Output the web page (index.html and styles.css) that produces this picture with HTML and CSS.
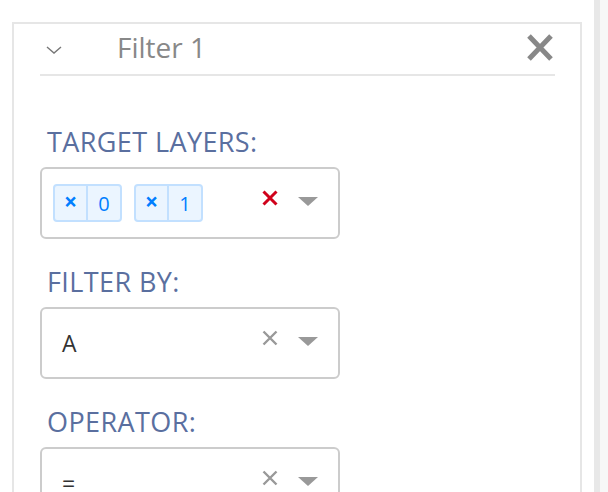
FILE: index.html
```html
<!DOCTYPE html>
<html lang="en">
<head>
<meta charset="utf-8">
<title>Filter</title>
<link rel="stylesheet" href="styles.css">
</head>
<body>
<div class="page">
  <main class="main">
    <section class="panel">
      <header class="panel-header">
        <svg class="chevron" width="16" height="8" viewBox="0 0 16 8"><polyline points="1,1 8,7 15,1" fill="none" stroke="#777" stroke-width="1.4"/></svg>
        <h2 class="title">Filter 1</h2>
        <svg class="close" width="26" height="27" viewBox="0 0 26 27"><path d="M2 2 L24 25 M24 2 L2 25" stroke="#888" stroke-width="5" fill="none"/></svg>
      </header>

      <div class="field">
        <label class="field-label">TARGET LAYERS:</label>
        <div class="select">
          <div class="select-values">
            <span class="tag"><span class="tag-remove">×</span><span class="tag-label">0</span></span>
            <span class="tag"><span class="tag-remove">×</span><span class="tag-label">1</span></span>
          </div>
          <svg class="clear clear-red" width="16" height="16" viewBox="0 0 16 16"><path d="M1.5 1.5 L14.5 14.5 M14.5 1.5 L1.5 14.5" stroke="#d0021b" stroke-width="3" fill="none"/></svg>
          <span class="arrow"></span>
        </div>
      </div>

      <div class="field">
        <label class="field-label">FILTER BY:</label>
        <div class="select">
          <div class="select-values"><span class="value-text">A</span></div>
          <svg class="clear" width="16" height="16" viewBox="0 0 16 16"><path d="M1.5 1.5 L14.5 14.5 M14.5 1.5 L1.5 14.5" stroke="#999" stroke-width="2.4" fill="none"/></svg>
          <span class="arrow"></span>
        </div>
      </div>

      <div class="field">
        <label class="field-label">OPERATOR:</label>
        <div class="select">
          <div class="select-values"><span class="value-text">=</span></div>
          <svg class="clear" width="16" height="16" viewBox="0 0 16 16"><path d="M1.5 1.5 L14.5 14.5 M14.5 1.5 L1.5 14.5" stroke="#999" stroke-width="2.4" fill="none"/></svg>
          <span class="arrow"></span>
        </div>
      </div>
    </section>
  </main>
  <div class="scrollbar"><div class="scrollbar-edge"></div><div class="scrollbar-track"></div></div>
</div>
</body>
</html>
```

FILE: styles.css
```css
html, body {
  margin: 0;
  padding: 0;
  height: 100%;
  overflow: hidden;
  background: #fff;
  font-family: "Open Sans", "Liberation Sans", sans-serif;
}

.page {
  display: flex;
  height: 100%;
}

.main {
  flex: 1;
  padding: 22px 0 0 12px;
}

.panel {
  width: 570px;
  height: 700px;
  box-sizing: border-box;
  border: 2px solid #e6e6e6;
  padding: 0 25px 0 26px;
}

.panel-header {
  display: flex;
  align-items: center;
  height: 52px;
  box-sizing: border-box;
  padding-bottom: 4px;
  border-bottom: 2px solid #e6e6e6;
  margin-bottom: 48px;
}

.chevron {
  margin-left: 6px;
  margin-top: 6px;
}

.title {
  flex: 1;
  margin: 0 0 0 55px;
  font-size: 28px;
  font-weight: 400;
  color: #888;
  line-height: 36px;
}

.close {
  margin-right: 2px;
}

.field {
  margin-bottom: 25px;
}

.field-label {
  display: block;
  font-size: 27px;
  letter-spacing: 0.4px;
  line-height: 36px;
  color: #5a6f9f;
  margin: 0 0 7px 7px;
}

.select {
  display: flex;
  align-items: center;
  width: 300px;
  height: 72px;
  box-sizing: border-box;
  border: 2px solid #cccccc;
  border-radius: 6px;
  padding: 0 20px 0 11px;
}

.select-values {
  flex: 1;
  display: flex;
  align-items: center;
  gap: 12px;
}

.value-text {
  font-size: 23px;
  color: #333;
  margin-left: 9px;
}

.tag {
  display: flex;
  height: 38px;
  box-sizing: border-box;
  background: #ebf5ff;
  border: 2px solid #c2e0ff;
  border-radius: 4px;
  color: #007eff;
}

.tag-remove {
  display: flex;
  align-items: center;
  justify-content: center;
  width: 33px;
  border-right: 2px solid #c2e0ff;
  font-size: 23px;
  font-weight: 700;
  line-height: 1;
  padding-bottom: 3px;
  box-sizing: border-box;
}

.tag-label {
  display: flex;
  align-items: center;
  justify-content: center;
  width: 32px;
  font-size: 20px;
}

.clear {
  margin-bottom: 10px;
  margin-right: 20px;
}

.arrow {
  width: 0;
  height: 0;
  border-top: 9px solid #999;
  border-left: 10px solid transparent;
  border-right: 10px solid transparent;
  margin-bottom: 4px;
}

.scrollbar {
  display: flex;
  width: 14px;
  height: 100%;
}

.scrollbar-edge {
  width: 6px;
  background: #e8e8e8;
}

.scrollbar-track {
  flex: 1;
  background: #f7f7f7;
}
```
